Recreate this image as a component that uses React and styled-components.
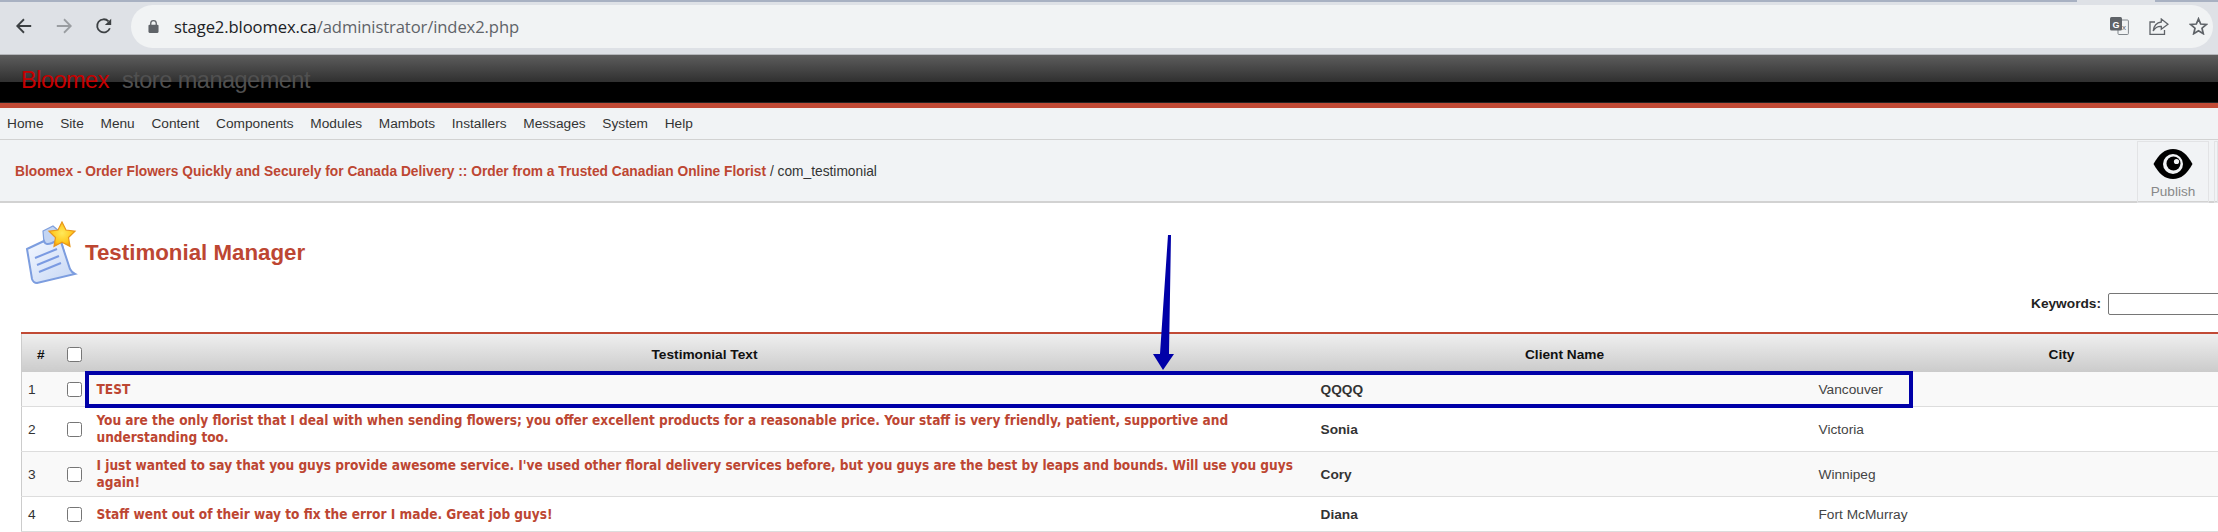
import React from 'react'
import styled, { createGlobalStyle } from 'styled-components'

const Global = createGlobalStyle`
	html, body {
		margin: 0;
		padding: 0;
		background: #fff;
		overflow: hidden;
	}
	body {
		font-family: "Liberation Sans", Arial, sans-serif;
	}
`

const Page = styled.div`
	position: relative;
	width: 2218px;
	height: 532px;
	overflow: hidden;
`

const TabStrip = styled.div`
	display: flex;
	justify-content: space-between;
	height: 2px;
	background: #dee1e6;
`

const TabEdge = styled.div`
	width: ${(p) => p.$width}px;
	background: #a8b1c2;
`

const Toolbar = styled.div`
	display: flex;
	align-items: center;
	height: 53px;
	padding: 0 5px 4px 4px;
	box-sizing: border-box;
	background: #dee1e6;
	border-bottom: 1px solid #b4b6ba;
`

const NavButton = styled.div`
	display: flex;
	width: 40px;
	justify-content: center;
`

const UrlPill = styled.div`
	display: flex;
	flex: 1;
	align-items: center;
	height: 43px;
	margin-left: 7px;
	padding: 0 5px 0 17px;
	border-radius: 22px;
	background: #f1f3f4;
`

const Url = styled.div`
	flex: 1;
	margin-left: 15px;
	font: 16.6px "Open Sans", sans-serif;
	letter-spacing: -0.1px;
	color: #5f6368;
`

const UrlHost = styled.span`
	color: #202124;
`

const UrlIcons = styled.div`
	display: flex;
	align-items: center;
	gap: 20px;
`

const Banner = styled.div`
	height: 48px;
	padding-left: 21px;
	box-sizing: border-box;
	background: linear-gradient(#5d5d5d 0, #303030 27px, #000 27px, #000 47px, #222 47px);
	font: 23.5px/51px "Liberation Sans", sans-serif;
	letter-spacing: -0.5px;
	white-space: nowrap;
`

const BrandName = styled.span`
	color: #c60000;
	margin-right: 7px;
`

const BrandTail = styled.span`
	color: #505050;
`

const RedBar = styled.div`
	height: 5px;
	background: #c14a35;
`

const MenuBar = styled.nav`
	display: flex;
	align-items: center;
	gap: 16.7px;
	height: 31px;
	padding-left: 7px;
	background: #f1f3f5;
	border-bottom: 1px solid #d2d2d2;
	font-size: 13.7px;
	color: #333;
`

const PathBar = styled.div`
	display: flex;
	align-items: center;
	justify-content: space-between;
	height: 63px;
	padding-left: 15px;
	box-sizing: border-box;
	background: #f1f3f5;
	border-bottom: 2px solid #d2d2d2;
	font-size: 13.75px;
	color: #333;
`

const PathText = styled.span`
	padding-top: 2px;
`

const PathLink = styled.b`
	color: #bd4632;
`

const Tools = styled.div`
	display: flex;
	gap: 5px;
	align-self: flex-start;
	margin-top: 1px;
`

const ToolButton = styled.div`
	display: flex;
	flex-direction: column;
	align-items: center;
	gap: 5px;
	width: ${(p) => p.$width}px;
	height: 62px;
	box-sizing: border-box;
	padding-top: 7px;
	border: 1px solid #e2e3e5;
	font-size: 13.6px;
	color: #888;
`

const Heading = styled.div`
	display: flex;
	align-items: center;
	height: 81px;
	padding: 19px 0 0 25px;
	box-sizing: border-box;
`

const Title = styled.h1`
	margin: 0 0 0 6px;
	font-size: 22.3px;
	font-weight: bold;
	color: #bd4632;
`

const Filter = styled.div`
	display: flex;
	align-items: center;
	justify-content: flex-end;
	gap: 7px;
	height: 48px;
	padding-bottom: 10px;
	margin-right: -60px;
	box-sizing: border-box;
	font-size: 13.7px;
	font-weight: bold;
	color: #222;
`

const Keyword = styled.div`
	width: 170px;
	height: 22px;
	margin-top: 2px;
	box-sizing: border-box;
	background: #fff;
	border: 1px solid #767676;
	border-radius: 2px;
`

const Table = styled.table`
	width: 2289px;
	margin-left: 21px;
	border-collapse: collapse;
	table-layout: fixed;
	border-left: 1px solid #ccc;
`

const Th = styled.th`
	height: 39px;
	padding: 2px 0 0 ${(p) => p.$pad || 0}px;
	box-sizing: border-box;
	background: linear-gradient(#efefef, #cbcbcb);
	border-top: 2px solid #c14a35;
	font-size: 13.7px;
	color: #111;
	text-align: center;
`

const Row = styled.tr`
	height: ${(p) => p.$height}px;
	background: ${(p) => (p.$odd ? '#f9f9f9' : '#fff')};
	border-bottom: 1px solid #ddd;
`

const NumCell = styled.td`
	padding: 1px 0 0 6px;
	font-size: 13.7px;
	color: #333;
`

const BoxCell = styled.td`
	padding: 1px 0 0;
	text-align: center;
`

const TextCell = styled.td`
	padding: 1px 20px 0 7px;
	font: bold 13.55px/17px "DejaVu Sans", Verdana, sans-serif;
	font-stretch: condensed;
	color: #bd4632;
`

const NameCell = styled.td`
	padding: 1px 0 0 4px;
	font-size: 13.7px;
	font-weight: bold;
	color: #333;
`

const CityCell = styled.td`
	padding: 1px 0 0 6px;
	font-size: 13.7px;
	color: #444;
`

const Check = styled.span`
	display: block;
	width: 15px;
	height: 15px;
	margin: 0 auto;
	box-sizing: border-box;
	background: #fff;
	border: 1px solid #767676;
	border-radius: 2.5px;
`

const Highlight = styled.div`
	position: absolute;
	left: 85px;
	top: 371px;
	width: 1828px;
	height: 37px;
	box-sizing: border-box;
	border: 4px solid #0000a8;
`

const ArrowMark = styled.svg`
	position: absolute;
	left: 1145px;
	top: 230px;
`

function Back({ color }) {
	return (
		<svg width="18" height="18" viewBox="0 0 20 20" fill="none" stroke={color} strokeWidth="2">
			<path d="M18 10H3M10 2.5 2.5 10l7.5 7.5" />
		</svg>
	)
}

function Forward({ color }) {
	return (
		<svg width="18" height="18" viewBox="0 0 20 20" fill="none" stroke={color} strokeWidth="2">
			<path d="M2 10h15M10 2.5l7.5 7.5-7.5 7.5" />
		</svg>
	)
}

function Reload() {
	return (
		<svg width="18" height="18" viewBox="0 0 20 20" fill="none">
			<path d="M16.5 12.5A7.3 7.3 0 1 1 15 4.8" stroke="#3c4043" strokeWidth="2" />
			<path d="M18 2v7h-7z" fill="#3c4043" />
		</svg>
	)
}

function Lock() {
	return (
		<svg width="11" height="15" viewBox="0 0 12 15">
			<path d="M3 6V4a3 3 0 0 1 6 0v2" fill="none" stroke="#5f6368" strokeWidth="1.4" />
			<rect x="0.5" y="5.5" width="11" height="9" rx="1.2" fill="#5f6368" />
		</svg>
	)
}

function Translate() {
	return (
		<svg width="19" height="18" viewBox="0 0 19 18">
			<rect x="8" y="3" width="10.4" height="14.5" rx="1" fill="#f1f3f4" stroke="#80868b" />
			<rect x="0" y="0" width="12" height="13.5" rx="1.5" fill="#5f6368" />
			<text x="2.6" y="10.5" fontSize="9" fontWeight="bold" fontFamily="Liberation Sans" fill="#fff">G</text>
			<text x="12" y="13" fontSize="8" fontFamily="Liberation Sans" fill="#5f6368">x</text>
		</svg>
	)
}

function Share() {
	return (
		<svg width="20" height="17" viewBox="0 0 20 17" fill="none" stroke="#5f6368" strokeWidth="1.3">
			<path d="M6 4H1v12.3h14.5V12" />
			<path d="M12.3 1 19 6.3l-6.7 5V8.3C8.5 8.1 6 9.7 4.2 13c.6-5 3.4-8.4 8.1-9z" />
		</svg>
	)
}

function Star() {
	return (
		<svg width="19" height="18" viewBox="0 0 19 18" fill="none" stroke="#5f6368" strokeWidth="1.7">
			<path d="M9.5 1.8l2.2 5.2 5.6.5-4.3 3.7 1.3 5.5-4.8-2.9-4.800 2.9 1.300-5.500-4.300-3.700 5.600-.5z" />
		</svg>
	)
}

function Eye() {
	return (
		<svg width="40" height="30" viewBox="0 0 40 30">
			<path d="M0.5 15C6 5 12 0 20 0s14 5 19.5 15C34 25 28 30 20 30S6 25 0.5 15z" fill="#000" />
			<circle cx="20" cy="15" r="10" fill="#f1f3f5" />
			<circle cx="20.5" cy="14.5" r="7" fill="#000" />
			<circle cx="17.5" cy="11.5" r="2.6" fill="#f1f3f5" transform="rotate(90 20 15)" />
		</svg>
	)
}

function NotesIcon() {
	return (
		<svg width="54" height="64" viewBox="0 0 54 64">
			<defs>
				<linearGradient id="paper" x1="0" y1="0" x2="1" y2="1">
					<stop offset="0" stopColor="#f4f8ff" />
					<stop offset="1" stopColor="#c5d6f4" />
				</linearGradient>
				<radialGradient id="gold" cx="0.5" cy="0.45" r="0.6">
					<stop offset="0" stopColor="#ffe95a" />
					<stop offset="0.7" stopColor="#ffc61a" />
					<stop offset="1" stopColor="#e88a10" />
				</radialGradient>
			</defs>
			<path d="M18 10l10-5 6 5 6 24-6 6-14-6z" fill="#c3d5f3" stroke="#7f9fdc" strokeWidth="1.2" />
			<path d="M2 28l17-8c1 3 3 4 8 2l8-4 10 30c1 2 3 4 5 5L12 62C9 62 8 61 7 58z" fill="url(#paper)" stroke="#7c9ddf" strokeWidth="2" />
			<path d="M10 37l22-9M12 44l22-9M14 51l22-9" stroke="#7b9be2" strokeWidth="2" />
			<path d="M37 1l4 8 9 1.2-6.5 6.3 1.5 9-8-4.3-8 4.3 1.5-9L24 10.2 33 9z" fill="url(#gold)" stroke="#e8961a" strokeWidth="1.2" />
		</svg>
	)
}

const rows = [
	{ num: 1, text: 'TEST', name: 'QQQQ', city: 'Vancouver', height: 34 },
	{
		num: 2,
		text: 'You are the only florist that I deal with when sending flowers; you offer excellent products for a reasonable price. Your staff is very friendly, patient, supportive and understanding too.',
		name: 'Sonia',
		city: 'Victoria',
		height: 45,
	},
	{
		num: 3,
		text: "I just wanted to say that you guys provide awesome service. I've used other floral delivery services before, but you guys are the best by leaps and bounds. Will use you guys again!",
		name: 'Cory',
		city: 'Winnipeg',
		height: 45,
	},
	{ num: 4, text: 'Staff went out of their way to fix the error I made. Great job guys!', name: 'Diana', city: 'Fort McMurray', height: 35 },
]

const menu = ['Home', 'Site', 'Menu', 'Content', 'Components', 'Modules', 'Mambots', 'Installers', 'Messages', 'System', 'Help']

export default function App() {
	return (
		<Page>
			<Global />
			<TabStrip>
				<TabEdge $width={2077} />
				<TabEdge $width={63} />
			</TabStrip>
			<Toolbar>
				<NavButton><Back color="#3c4043" /></NavButton>
				<NavButton><Forward color="#9a9da1" /></NavButton>
				<NavButton><Reload /></NavButton>
				<UrlPill>
					<Lock />
					<Url>
						<UrlHost>stage2.bloomex.ca</UrlHost>/administrator/index2.php
					</Url>
					<UrlIcons>
						<Translate />
						<Share />
						<Star />
					</UrlIcons>
				</UrlPill>
			</Toolbar>
			<Banner>
				<BrandName>Bloomex</BrandName> <BrandTail>store management</BrandTail>
			</Banner>
			<RedBar />
			<MenuBar>
				{menu.map((item) => (
					<span key={item}>{item}</span>
				))}
			</MenuBar>
			<PathBar>
				<PathText>
					<PathLink>Bloomex - Order Flowers Quickly and Securely for Canada Delivery :: Order from a Trusted Canadian Online Florist</PathLink> / com_testimonial
				</PathText>
				<Tools>
					<ToolButton $width={72}>
						<Eye />
						Publish
					</ToolButton>
					<ToolButton $width={4} />
				</Tools>
			</PathBar>
			<Heading>
				<NotesIcon />
				<Title>Testimonial Manager</Title>
			</Heading>
			<Filter>
				Keywords:
				<Keyword />
			</Filter>
			<Table>
				<colgroup>
					<col width="38" />
					<col width="30" />
					<col width="1227" />
					<col width="496" />
					<col width="498" />
				</colgroup>
				<thead>
					<tr>
						<Th>#</Th>
						<Th><Check /></Th>
						<Th $pad={3}>Testimonial Text</Th>
						<Th>Client Name</Th>
						<Th>City</Th>
					</tr>
				</thead>
				<tbody>
					{rows.map((row) => (
						<Row key={row.num} $height={row.height} $odd={row.num % 2 === 1}>
							<NumCell>{row.num}</NumCell>
							<BoxCell><Check /></BoxCell>
							<TextCell>{row.text}</TextCell>
							<NameCell>{row.name}</NameCell>
							<CityCell>{row.city}</CityCell>
						</Row>
					))}
				</tbody>
			</Table>
			<Highlight />
			<ArrowMark width="40" height="145" viewBox="0 0 40 145">
				<path d="M23 5 L26 5 L24 124 L29 124 L18 140 L8 124 L15 124 Z" fill="#0000a8" />
			</ArrowMark>
		</Page>
	)
}
